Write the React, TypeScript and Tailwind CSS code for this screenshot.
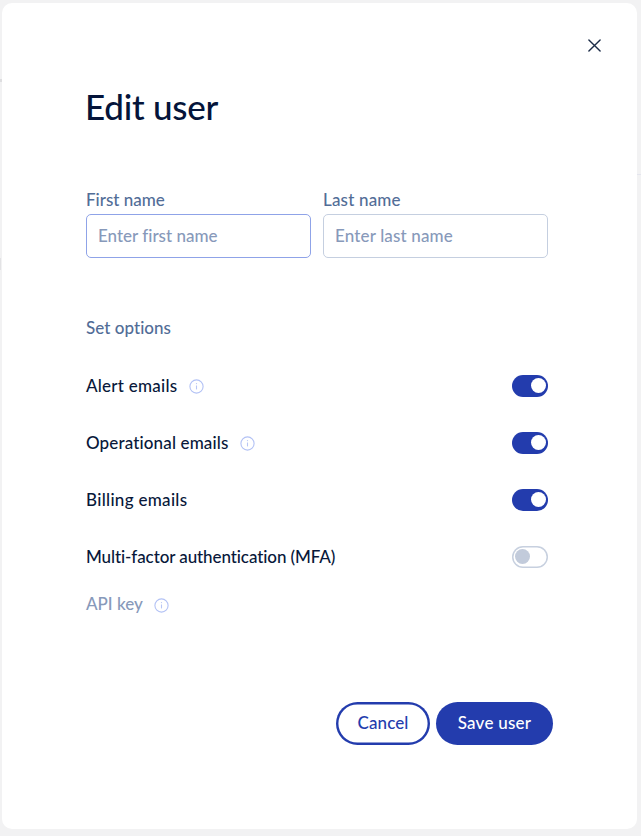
import React from "react";

function InfoIcon() {
  return (
    <svg width="15" height="15" viewBox="0 0 15 15" fill="none" className="mt-[2px] shrink-0">
      <circle cx="7.5" cy="7.5" r="6.6" stroke="#b3c2f5" strokeWidth="1.1" />
      <path d="M7.5 6.5V10.4" stroke="#b9c6f5" strokeWidth="1.1" />
      <circle cx="7.5" cy="4.6" r="0.65" fill="#b9c6f5" />
    </svg>
  );
}

function Toggle({ on }: { on: boolean }) {
  return (
    <button
      type="button"
      role="switch"
      aria-checked={on}
      className={
        on
          ? "flex h-[22px] w-9 items-center justify-end rounded-full bg-[#233cad] pr-[2.5px]"
          : "flex h-[22px] w-9 items-center rounded-full bg-white pl-[3px] shadow-[inset_0_0_0_1.5px_#c7d0df]"
      }
    >
      <span className={on ? "size-[15px] rounded-full bg-white" : "size-[15px] rounded-full bg-[#c2cbdb]"} />
    </button>
  );
}

function Field({ label, placeholder, active, labelSpacing, inputSpacing }: { label: string; placeholder: string; active?: boolean; labelSpacing: string; inputSpacing: string }) {
  return (
    <label className="flex w-[225px] flex-col">
      <span className={"h-6 text-[17px] leading-6 text-[#526d97] " + labelSpacing}>{label}</span>
      <input
        placeholder={placeholder}
        className={
          "mt-[2px] h-[44px] w-full rounded-[5px] border bg-white px-[11px] pb-[2px] text-[17px] outline-none placeholder:text-[#8799ba] " +
          inputSpacing +
          (active ? " border-[#8fa3e8]" : " border-[#c5cfe0]")
        }
      />
    </label>
  );
}

function Option({ label, info, on, spacing }: { label: string; info?: boolean; on: boolean; spacing: string }) {
  return (
    <div className="flex h-[57px] items-center justify-between">
      <div className="flex items-center gap-[11.5px]">
        <span className={"text-[17px] leading-6 text-[#08183a] " + spacing}>{label}</span>
        {info && <InfoIcon />}
      </div>
      <Toggle on={on} />
    </div>
  );
}

export default function App() {
  return (
    <div className="relative h-[836px] w-[641px] overflow-hidden bg-[#f2f2f3] pl-[2px] pt-[3px] font-['Lato',sans-serif] font-medium [font-variant-ligatures:none]">
      {/* Edges of the dimmed page behind the dialog */}
      <span className="absolute left-0 top-[79px] h-[3px] w-[2px] bg-[#dedee0]" />
      <span className="absolute right-0 top-[174px] h-px w-1 bg-[#e4e5ee]" />
      <span className="absolute left-0 top-[258px] h-3 w-px bg-[#e3e3e5]" />
      <main className="flex h-[826px] w-[635px] flex-col rounded-[10px] bg-white pl-[84px]">
        <button type="button" aria-label="Close" className="ml-[502px] mt-[36px] size-[13px]">
          <svg width="13" height="13" viewBox="0 0 13 13" stroke="#1c2c48" strokeWidth="1.4" strokeLinecap="round">
            <path d="M0.9 0.9L12.1 12.1M12.1 0.9L0.9 12.1" />
          </svg>
        </button>
        <h1 className="-ml-px mt-[30px] h-12 text-[35px] font-medium leading-[48px] tracking-[-0.25px] text-[#04143a]">Edit user</h1>
        <div className="mt-[58px] flex gap-3">
          <Field label="First name" placeholder="Enter first name" active labelSpacing="tracking-[0px]" inputSpacing="tracking-[0px]" />
          <Field label="Last name" placeholder="Enter last name" labelSpacing="tracking-[0.18px]" inputSpacing="tracking-[0.15px]" />
        </div>
        <h2 className="mt-[58px] h-6 text-[17px] leading-6 tracking-[0.04px] text-[#526d97]">Set options</h2>
        <section className="mt-[17px] w-[462px]">
          <Option label="Alert emails" info on spacing="tracking-[0.25px]" />
          <Option label="Operational emails" info on spacing="tracking-[0.14px]" />
          <Option label="Billing emails" on spacing="tracking-[0.31px]" />
          <Option label="Multi-factor authentication (MFA)" on={false} spacing="tracking-[-0.09px]" />
        </section>
        <div className="mt-[7px] flex h-6 items-center gap-[11.5px]">
          <span className="text-[17px] leading-6 text-[#8799ba]">API key</span>
          <InfoIcon />
        </div>
        <div className="ml-[250px] mt-[86px] flex gap-[6px]">
          <button type="button" className="h-[43px] w-[94px] rounded-full pb-[2px] text-[17px] tracking-[0.1px] text-[#233cad] shadow-[inset_0_0_0_2.4px_#233cad]">Cancel</button>
          <button type="button" className="h-[43px] w-[117px] rounded-full bg-[#233cad] pb-[2px] text-[17px] tracking-[0.25px] text-white">Save user</button>
        </div>
      </main>
    </div>
  );
}
